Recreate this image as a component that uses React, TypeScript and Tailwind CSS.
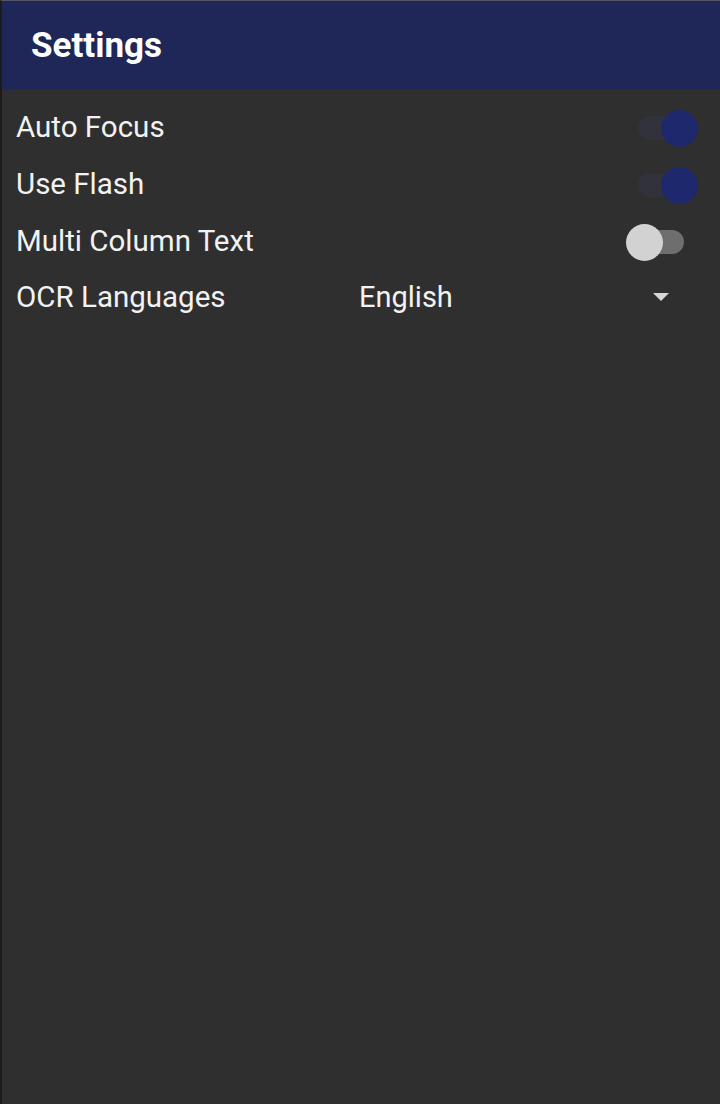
import React from "react";

function Switch({ on }: { on: boolean }) {
  return (
    <div className="relative w-[76px] h-[40px] shrink-0">
      <div
        className={
          "absolute left-[14px] top-[8px] w-[46px] h-[24px] rounded-full " +
          (on ? "bg-[#31323b]" : "bg-[#6e6e6e]")
        }
      />
      <div
        className={
          "absolute top-[2px] w-[37px] h-[37px] rounded-full " +
          (on ? "left-[37px] bg-[#1e286c]" : "left-[2px] bg-[#d2d2d2]")
        }
      />
    </div>
  );
}

function Row({ label, children }: { label: string; children?: React.ReactNode }) {
  return (
    <div className="flex items-center h-[57px] pl-[14px] pr-[20px]">
      <div className="flex-1 text-[29.5px] text-[#f2f2f2] leading-none">{label}</div>
      {children}
    </div>
  );
}

export default function App() {
  return (
    <div
      className="w-[720px] h-[1104px] flex flex-col bg-[#2f2f2f] border-l-2 border-t border-l-[#1c1c1c] border-t-[#555566]"
      style={{ fontFamily: "Roboto, 'Noto Sans', sans-serif" }}
    >
      <div className="h-[89px] shrink-0 bg-[#1f2658] flex items-center pl-[29px]">
        <span className="text-[35px] font-bold text-white leading-none">Settings</span>
      </div>
      <div className="flex flex-col pt-[9px]">
        <Row label="Auto Focus">
          <Switch on={true} />
        </Row>
        <Row label="Use Flash">
          <Switch on={true} />
        </Row>
        <Row label="Multi Column Text">
          <Switch on={false} />
        </Row>
        <div className="flex items-center h-[55px] pl-[14px]">
          <div className="w-[343px] text-[29.5px] text-[#f2f2f2] leading-none">OCR Languages</div>
          <div className="flex-1 text-[29px] text-[#f2f2f2] leading-none">English</div>
          <svg width="18" height="9" viewBox="0 0 18 9" className="mr-[50px]">
            <polygon points="1,0 17,0 9,8" fill="#d6d6d6" />
          </svg>
        </div>
      </div>
    </div>
  );
}
